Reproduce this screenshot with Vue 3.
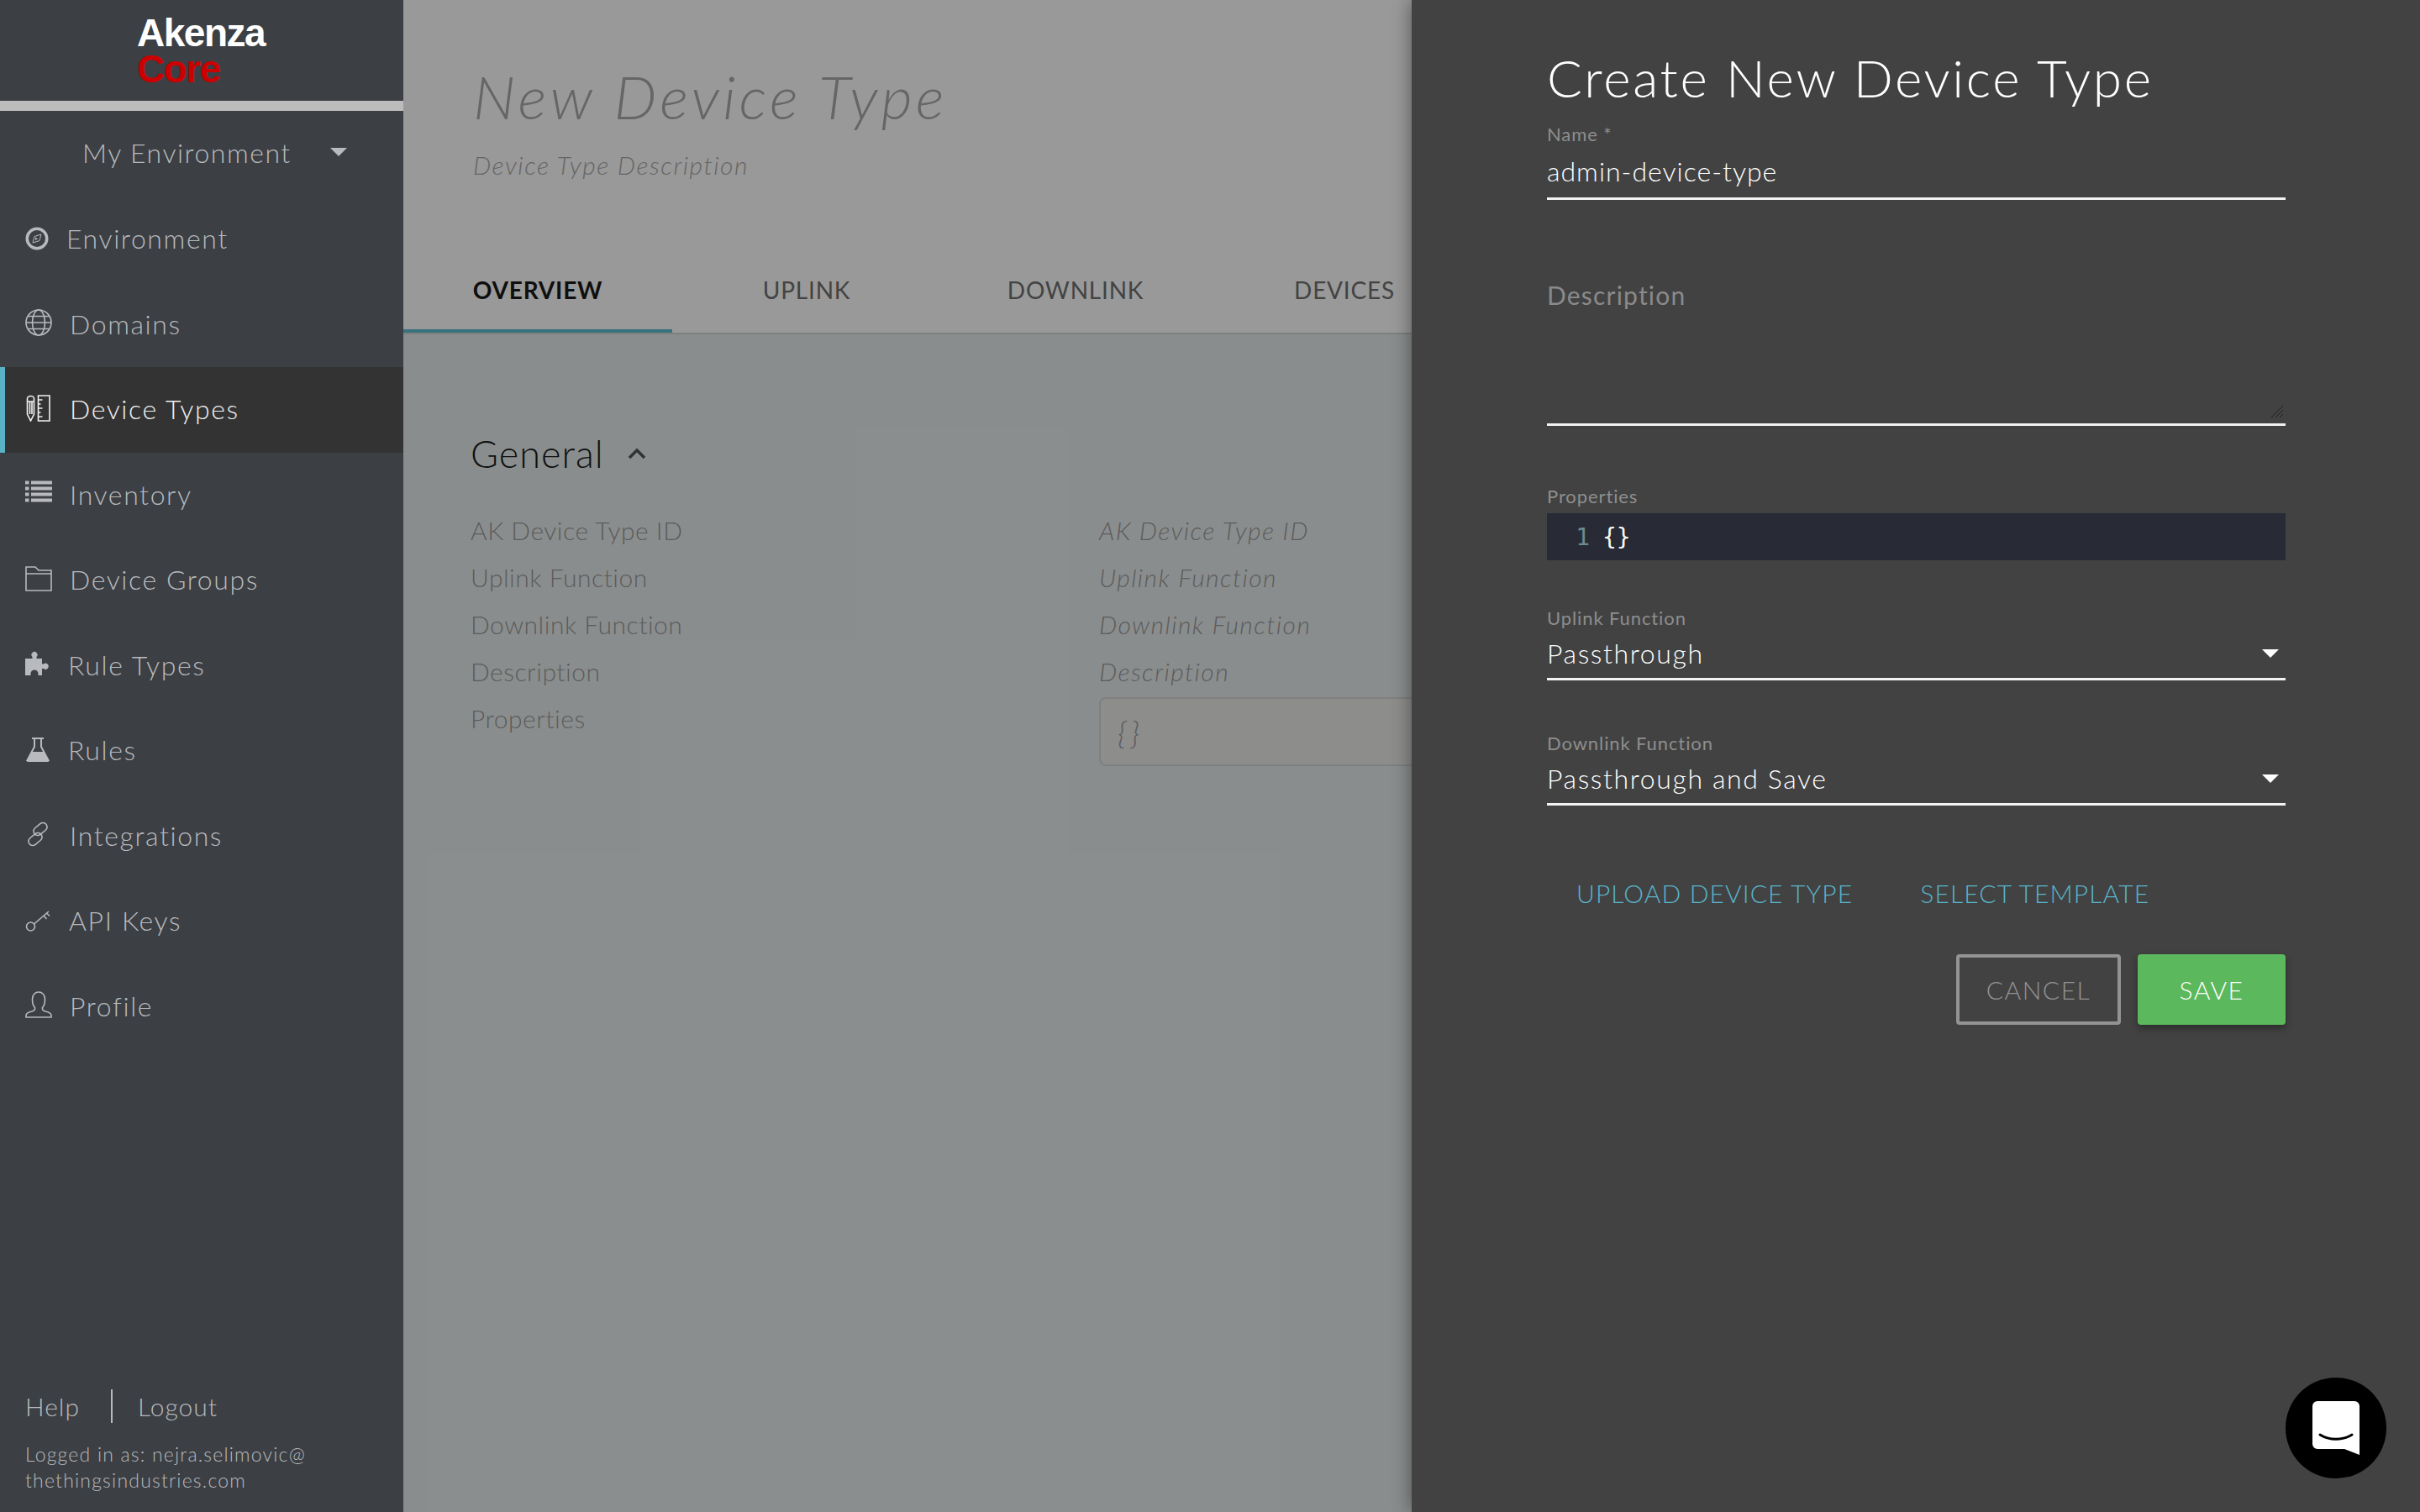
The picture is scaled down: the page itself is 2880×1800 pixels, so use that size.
<script setup>
const navItems = [
  { label: 'Environment', icon: 'compass', width: 28 },
  { label: 'Domains', icon: 'globe', width: 32 },
  { label: 'Device Types', icon: 'tools', width: 32, active: true },
  { label: 'Inventory', icon: 'list', width: 32 },
  { label: 'Device Groups', icon: 'folder', width: 32 },
  { label: 'Rule Types', icon: 'puzzle', width: 30 },
  { label: 'Rules', icon: 'flask', width: 30 },
  { label: 'Integrations', icon: 'link', width: 32 },
  { label: 'API Keys', icon: 'key', width: 31 },
  { label: 'Profile', icon: 'user', width: 32 },
]
const tabs = ['Overview', 'Uplink', 'Downlink', 'Devices']
const generalRows = ['AK Device Type ID', 'Uplink Function', 'Downlink Function', 'Description']
</script>

<template>
  <div class="page">
    <aside class="sidebar">
      <div class="logo">
        <span class="logo-top">Akenza</span>
        <span class="logo-bottom">Core</span>
      </div>
      <div class="env-select">
        <span>My Environment</span>
        <i class="caret"></i>
      </div>
      <nav class="nav">
        <a v-for="item in navItems" :key="item.label" class="nav-item" :class="{ active: item.active }">
          <svg class="nav-icon" :width="item.width" height="32" :viewBox="`0 0 ${item.width} 32`" fill="none" stroke="currentColor" stroke-width="1.6">
            <g v-if="item.icon === 'compass'" transform="translate(0 3)">
              <circle cx="14" cy="14" r="11.750" stroke-width="3.500" />
              <path d="M19 9l-2 7.500L9 19l2-7.500z" stroke-width="1" />
              <path d="M12 12.500v3.500l3-1.800z" fill="currentColor" stroke="none" />
            </g>
            <template v-else-if="item.icon === 'globe'">
              <circle cx="16" cy="16" r="15" />
              <ellipse cx="16" cy="16" rx="7.500" ry="15" />
              <path d="M1 16h30M3.500 8.500h25M3.500 23.500h25" />
            </template>
            <template v-else-if="item.icon === 'tools'">
              <path d="M2.500 4.500a4 3 0 0 1 8 0V23l-4 8-4-8zM2.500 8h8M5.500 8v15M8 8v15" />
              <path d="M15.500 1h13.500v30H15.500zM15.500 6h5M15.500 11h3M15.500 16h5M15.500 21h3M15.500 26h5" />
            </template>
            <template v-else-if="item.icon === 'list'">
              <path d="M0 1.500h4.500v4H0zM7 1.500h25v4H7zM0 8.500h4.500v4H0zM7 8.500h25v4H7zM0 15.500h4.500v4H0zM7 15.500h25v4H7zM0 22.500h4.500v4H0zM7 22.500h25v4H7z" fill="currentColor" stroke="none" />
            </template>
            <template v-else-if="item.icon === 'folder'">
              <path d="M1 2h11l4 4h15v24H1zM1 10h30" />
            </template>
            <template v-else-if="item.icon === 'puzzle'">
              <path d="M0 10h8.500V8a3.500 3.500 0 1 1 5 0v2H20v6.500h2a3.500 3.500 0 1 1 0 5.500h-2v8h-4.500v-2a4.500 4.500 0 0 0-9 0v2H0z" fill="currentColor" stroke="none" />
            </template>
            <template v-else-if="item.icon === 'flask'">
              <path d="M8 3h14M11 3v10L2.500 29h25L19 13V3" stroke-width="2" />
              <path d="M7.500 19h15l5.500 10.500a1 1 0 0 1-1 1.500H3a1 1 0 0 1-1-1.500z" fill="currentColor" stroke="none" />
            </template>
            <template v-else-if="item.icon === 'link'">
              <rect x="9" y="5" width="18" height="10" rx="5" transform="rotate(-40 18 10)" />
              <rect x="3" y="17" width="18" height="10" rx="5" transform="rotate(-40 12 22)" />
            </template>
            <template v-else-if="item.icon === 'key'">
              <circle cx="6.500" cy="24" r="5" />
              <path d="M10.500 21L28 6M22 11l3.500 4M25.500 8l3.500 3.500" />
            </template>
            <template v-else>
              <path d="M1 31v-2c0-3 2-4 7-5 3-.7 4-2 3.500-4.500C9 17 8.500 13 8.500 9.500 8.500 4 12 1 16 1s7.500 3 7.500 8.500c0 3.500-.5 7.500-3 10-.500 2.500.5 3.800 3.500 4.500 5 1 7 2 7 5v2z" />
            </template>
          </svg>
          <span>{{ item.label }}</span>
        </a>
      </nav>
      <div class="side-foot">
        <div class="foot-links">
          <a>Help</a>
          <i class="foot-sep"></i>
          <a>Logout</a>
        </div>
        <p class="logged">Logged in as: nejra.selimovic@<br>thethingsindustries.com</p>
      </div>
    </aside>

    <main class="main">
      <header class="head">
        <h1>New Device Type</h1>
        <p>Device Type Description</p>
      </header>
      <div class="tabs">
        <div v-for="(tab, i) in tabs" :key="tab" class="tab" :class="{ current: i === 0 }">{{ tab }}</div>
      </div>
      <section class="content">
        <h2>General
          <svg width="22" height="14" viewBox="0 0 22 14" fill="none" stroke="currentColor" stroke-width="3.500"><path d="M2 12l9-9 9 9" /></svg>
        </h2>
        <div class="detail">
          <template v-for="row in generalRows" :key="row">
            <div class="key">{{ row }}</div>
            <div class="val">{{ row }}</div>
          </template>
          <div class="key">Properties</div>
          <div class="code-box">{}</div>
        </div>
      </section>
    </main>

    <div class="drawer">
      <h3>Create New Device Type</h3>
      <div class="field name-field">
        <label>Name *</label>
        <div class="value">admin-device-type</div>
      </div>
      <div class="field desc-field">
        <div class="placeholder">Description</div>
        <svg class="grip" width="16" height="16" viewBox="0 0 16 16" stroke="#222" stroke-width="1">
          <path d="M1 15L15 1M6 15L15 6M11 15l4-4" />
        </svg>
      </div>
      <div class="props">
        <label>Properties</label>
        <div class="editor"><span class="line-no">1</span><span class="code">{}</span></div>
      </div>
      <div class="field select-field">
        <label>Uplink Function</label>
        <div class="value">Passthrough<i class="arrow"></i></div>
      </div>
      <div class="field select-field second">
        <label>Downlink Function</label>
        <div class="value">Passthrough and Save<i class="arrow"></i></div>
      </div>
      <div class="links">
        <a>Upload Device Type</a>
        <a>Select Template</a>
      </div>
      <div class="actions">
        <button class="cancel">Cancel</button>
        <button class="save">Save</button>
      </div>
    </div>

    <div class="chat">
      <svg width="56" height="64" viewBox="0 0 56 64">
        <path d="M6 0h44a6 6 0 0 1 6 6v58l-18-7H6a6 6 0 0 1-6-6V6a6 6 0 0 1 6-6z" fill="#fff" />
        <path d="M9 40c11 7 27 7 38 0" fill="none" stroke="#000" stroke-width="3" stroke-linecap="round" />
      </svg>
    </div>
  </div>
</template>

<style>
html, body { margin: 0; background: #999; }
</style>

<style scoped>
.page {
  position: relative;
  display: flex;
  width: 2880px;
  height: 1800px;
  overflow: hidden;
  font-family: Lato, "Open Sans", sans-serif;
  font-weight: 300;
  background: #fff;
}

.sidebar {
  position: relative;
  z-index: 3;
  display: flex;
  flex-direction: column;
  flex: 0 0 480px;
  background: #3c3f44;
  color: #b8babd;
}
.logo {
  display: flex;
  flex-direction: column;
  height: 120px;
  padding-left: 163px;
  box-sizing: border-box;
  font-family: "Liberation Sans", Arial, sans-serif;
  font-weight: 700;
  font-size: 46px;
  letter-spacing: -1.500px;
  line-height: 43px;
  padding-top: 18px;
}
.logo-top { color: #fff; }
.logo-bottom { color: #cc0000; }
.env-select {
  display: flex;
  align-items: center;
  padding: 0 0 4px 98px;
  height: 98px;
  border-top: 12px solid #bdbcbd;
  font-size: 32px;
  letter-spacing: 1.500px;
}
.caret {
  margin-left: 46px;
  border-left: 10px solid transparent;
  border-right: 10px solid transparent;
  border-top: 10px solid #b8babd;
}
.nav { display: flex; flex-direction: column; }
.nav-item {
  display: flex;
  align-items: center;
  gap: 21px;
  height: 101.500px;
  padding-left: 30px;
  font-size: 32px;
  letter-spacing: 1.600px;
}
.nav-item span { margin-bottom: 2px; }
.nav-icon { flex: none; margin-bottom: 4px; }
.nav-item.active {
  background: #333;
  color: #f0f0f0;
  box-shadow: inset 6px 0 0 #59b2c5;
}
.side-foot { margin-top: auto; padding: 0 0 22px 30px; }
.foot-links {
  display: flex;
  align-items: center;
  font-size: 30px;
  letter-spacing: 1px;
}
.foot-sep {
  width: 2px;
  height: 40px;
  margin: 0 30px 0 37px;
  background: #b8babd;
}
.logged {
  margin: 22px 0 0;
  font-size: 23px;
  line-height: 31px;
  letter-spacing: 1.200px;
}

.main {
  flex: 1;
  display: flex;
  flex-direction: column;
  min-width: 0;
  color: #aaa;
}
.head { height: 316px; padding: 72px 0 0 83px; box-sizing: border-box; }
.head h1 {
  margin: 0;
  font-size: 72px;
  line-height: 84px;
  font-weight: 300;
  font-style: italic;
  color: #aaa;
  letter-spacing: 4.200px;
}
.head p {
  margin: 20px 0 0;
  font-size: 30px;
  font-style: italic;
  line-height: 40px;
  letter-spacing: 1.500px;
  color: #aaa;
}
.tabs {
  display: flex;
  height: 80px;
  border-bottom: 2px solid #d4d6d6;
}
.tab {
  position: relative;
  flex: 0 0 320px;
  height: 80px;
  display: flex;
  align-items: center;
  justify-content: center;
  padding-bottom: 22px;
  box-sizing: border-box;
  font-size: 28px;
  font-weight: 400;
  letter-spacing: 0.800px;
  text-transform: uppercase;
  color: #707070;
}
.tab.current { color: #1a1a1a; font-weight: 700; }
.tab.current::after {
  content: "";
  position: absolute;
  left: 0;
  right: 0;
  bottom: 0;
  height: 4px;
  background: #5cc0d0;
}
.content {
  flex: 1;
  background: #e6ecec;
  padding: 112px 0 0 80px;
}
.content h2 {
  display: flex;
  align-items: center;
  gap: 28px;
  margin: 0;
  height: 60px;
  font-size: 45px;
  font-weight: 300;
  letter-spacing: 1px;
  color: #1c1c1c;
}
.content h2 svg { color: #555; }
.detail {
  display: grid;
  grid-template-columns: 748px 1fr;
  grid-auto-rows: 56px;
  margin-top: 33px;
  font-size: 30px;
  align-items: center;
  letter-spacing: 0.500px;
  color: #999;
}
.val { font-style: italic; letter-spacing: 1.400px; }
.code-box {
  align-self: start;
  width: 800px;
  height: 82px;
  margin-top: 3px;
  padding-left: 20px;
  box-sizing: border-box;
  display: flex;
  align-items: center;
  border: 2px solid #d4d4d4;
  border-radius: 8px;
  background: #ececea;
  font-size: 38px;
  font-style: italic;
  letter-spacing: 5px;
  color: #999;
}

.drawer {
  position: absolute;
  z-index: 2;
  top: 0;
  right: 0;
  bottom: 0;
  width: 1200px;
  box-sizing: border-box;
  padding: 0 160px 0 161px;
  background: #424242;
  box-shadow: 0 0 22px rgba(0, 0, 0, 0.45);
  color: #fff;
}
.page::after {
  content: "";
  position: absolute;
  z-index: 1;
  inset: 0;
  background: rgba(0, 0, 0, 0.4);
}
.drawer h3 {
  margin: 0;
  padding-top: 54px;
  font-size: 62px;
  font-weight: 300;
  line-height: 76px;
  letter-spacing: 2.700px;
}
.field { position: relative; border-bottom: 3px solid #f2f2f2; }
.field label, .props label {
  display: block;
  font-size: 22px;
  font-weight: 400;
  line-height: 28px;
  letter-spacing: 0.900px;
  color: #8e8e8e;
}
.name-field { margin-top: 16px; }
.value {
  display: flex;
  justify-content: space-between;
  align-items: center;
  font-size: 32px;
  line-height: 40px;
  letter-spacing: 1px;
  padding: 10px 0 11px;
}
.desc-field { height: 235px; margin-top: 34px; box-sizing: border-box; }
.placeholder {
  padding-top: 59px;
  font-size: 30px;
  font-weight: 400;
  line-height: 40px;
  letter-spacing: 1.200px;
  color: #8a8a8a;
}
.grip {
  position: absolute;
  right: 2px;
  bottom: 6px;
}
.props { margin-top: 70px; }
.editor {
  display: flex;
  align-items: center;
  height: 56px;
  margin-top: 6px;
  background: #282b36;
  font-family: "DejaVu Sans Mono", monospace;
  font-weight: 400;
  font-size: 28px;
}
.line-no { width: 51px; margin-right: 15px; text-align: right; color: #6c8c8c; }
.code { color: #f8f8f2; }
.select-field { margin-top: 55px; }
.select-field .value { padding: 8px 0 9px; letter-spacing: 1.600px; }
.select-field.second { margin-top: 61px; }
.arrow {
  margin-right: 8px;
  border-left: 10px solid transparent;
  border-right: 10px solid transparent;
  border-top: 10px solid #fff;
}
.links {
  display: flex;
  gap: 80px;
  margin-top: 84px;
  padding-left: 35px;
  font-size: 30px;
  line-height: 40px;
  letter-spacing: 1.100px;
  text-transform: uppercase;
  color: #58b4cb;
}
.actions {
  display: flex;
  justify-content: flex-end;
  gap: 20px;
  margin-top: 53px;
}
.actions button {
  height: 84px;
  border-radius: 4px;
  font-family: inherit;
  font-weight: 300;
  font-size: 30px;
  letter-spacing: 1.500px;
  text-transform: uppercase;
}
.cancel {
  width: 196px;
  box-sizing: border-box;
  border: 4px solid #939393;
  background: none;
  color: #939393;
}
.save {
  width: 176px;
  border: 0;
  background: #5cb85c;
  color: #fff;
  box-shadow: 0 4px 8px rgba(0, 0, 0, 0.35);
}
.chat {
  position: absolute;
  z-index: 4;
  right: 40px;
  bottom: 40px;
  display: flex;
  align-items: center;
  justify-content: center;
  width: 120px;
  height: 120px;
  border-radius: 50%;
  background: #000;
}
</style>
